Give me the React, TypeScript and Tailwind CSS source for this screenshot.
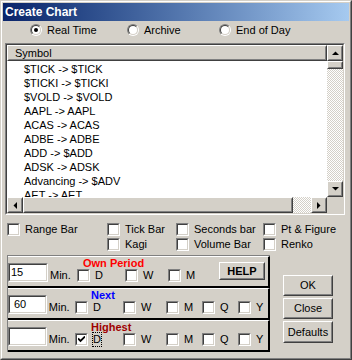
import type { ReactNode } from "react";

const font = 'font-["Liberation_Sans",Arial,sans-serif]';
const dither =
	"bg-[image:repeating-conic-gradient(#ffffff_0%_25%,#d4d0c8_0%_50%)] bg-[length:2px_2px]";

function Sunken({ className = "", inner = "", children }: { className?: string; inner?: string; children?: ReactNode }) {
	return (
		<div className={`border border-t-[#808080] border-l-[#808080] border-r-white border-b-white ${className}`}>
			<div className={`h-full w-full border border-t-[#404040] border-l-[#404040] border-r-[#d4d0c8] border-b-[#d4d0c8] ${inner}`}>
				{children}
			</div>
		</div>
	);
}

function Raised({ className = "", inner = "", children }: { className?: string; inner?: string; children?: ReactNode }) {
	return (
		<div className={`border border-t-white border-l-white border-r-[#404040] border-b-[#404040] bg-[#d4d0c8] ${className}`}>
			<div className={`h-full w-full border border-t-[#d4d0c8] border-l-[#d4d0c8] border-r-[#808080] border-b-[#808080] ${inner}`}>
				{children}
			</div>
		</div>
	);
}

function Arrow({ dir }: { dir: "up" | "down" | "left" | "right" }) {
	const pts = {
		up: "0,4 7,4 3.5,0.5",
		down: "0,0 7,0 3.5,3.5",
		left: "4,0 4,7 0.5,3.5",
		right: "0,0 0,7 3.5,3.5",
	}[dir];
	const vertical = dir === "up" || dir === "down";
	return (
		<Raised className="w-[16px] h-[16px] shrink-0" inner="flex items-center justify-center">
			<svg width={vertical ? 7 : 4} height={vertical ? 4 : 7} viewBox={vertical ? "0 0 7 4" : "0 0 4 7"}>
				<polygon points={pts} fill="#000" />
			</svg>
		</Raised>
	);
}

function Box({ checked = false }: { checked?: boolean }) {
	return (
		<Sunken className="w-[13px] h-[13px] shrink-0" inner="bg-white flex items-center justify-center">
			{checked && (
				<svg width="7" height="7" viewBox="0 0 7 7">
					<path d="M0 2.5 L2.5 5 L7 0.5" stroke="#000" strokeWidth="1.8" fill="none" />
				</svg>
			)}
		</Sunken>
	);
}

function Check({ label, w, checked = false, focus = false }: { label: string; w?: string; checked?: boolean; focus?: boolean }) {
	return (
		<div className={`flex items-center shrink-0 ${w ?? ""}`}>
			<Box checked={checked} />
			<span className={`ml-[5px] leading-[13px] ${focus ? "outline outline-1 outline-dotted outline-black" : ""}`}>{label}</span>
		</div>
	);
}

function Radio({ label, checked = false, w }: { label: string; checked?: boolean; w: string }) {
	return (
		<div className={`flex items-center ${w}`}>
			<div className="w-[12px] h-[12px] rounded-full border border-t-[#808080] border-l-[#808080] border-r-white border-b-white">
				<div className="w-full h-full rounded-full border border-t-[#404040] border-l-[#404040] border-r-[#d4d0c8] border-b-[#d4d0c8] bg-white flex items-center justify-center">
					{checked && <div className="w-[4px] h-[4px] rounded-full bg-black" />}
				</div>
			</div>
			<span className="ml-[5px]">{label}</span>
		</div>
	);
}

const symbols = [
	"$TICK -> $TICK",
	"$TICKI -> $TICKI",
	"$VOLD -> $VOLD",
	"AAPL -> AAPL",
	"ACAS -> ACAS",
	"ADBE -> ADBE",
	"ADD -> $ADD",
	"ADSK -> ADSK",
	"Advancing -> $ADV",
	"AET -> AET",
];

function Section({
	value,
	valuePad,
	title,
	titleColor,
	titleMl,
	checks,
	help = false,
	checkedD = false,
}: {
	value: string;
	valuePad: string;
	title: string;
	titleColor: string;
	titleMl: string;
	checks: string[];
	help?: boolean;
	checkedD?: boolean;
}) {
	const widths: Record<string, string> = { D: "w-[48px]", W: "w-[43px]", M: "w-[36px]", Q: "w-[36px]", Y: "w-[30px]" };
	return (
		<div className="h-[32px] border-t border-t-white border-b-2 border-b-black border-r-2 border-r-black flex items-start">
			<Sunken className="w-[40px] h-[19px] mt-[6px]" inner={`bg-white flex items-center ${valuePad}`}>
				{value}
			</Sunken>
			<span className="ml-[2px] w-[27px] mt-[12px] leading-[13px]">Min.</span>
			<div className={`flex flex-col ${help ? "w-[142px]" : ""}`}>
				<div className={`h-[12px] leading-[12px] font-bold ${titleColor} ${titleMl}`}>{title}</div>
				<div className="flex">
					{checks.map((c) => (
						<Check key={c} label={c} w={widths[c]} checked={checkedD && c === "D"} focus={checkedD && c === "D"} />
					))}
				</div>
			</div>
			{help && (
				<Raised className="w-[46px] h-[18px] mt-[5px]" inner="flex items-center justify-center font-bold">
					HELP
				</Raised>
			)}
		</div>
	);
}

export default function App() {
	return (
		<div className={`w-[352px] h-[360px] overflow-hidden bg-[#d4d0c8] text-[11px] text-black ${font} border border-t-[#d4d0c8] border-l-[#d4d0c8] border-r-[#404040] border-b-[#404040]`}>
			<div className="h-full border border-t-white border-l-white border-r-[#808080] border-b-[#808080] p-[1px]">
				<div className="h-[18px] bg-gradient-to-r from-[#0a246a] to-[#a6caf0] flex items-center pl-[2px]">
					<span className="text-white font-bold text-[12px]">Create Chart</span>
				</div>

				<div className="flex h-[12px] mt-[3px] ml-[27px]">
					<Radio label="Real Time" checked w="w-[97px]" />
					<Radio label="Archive" w="w-[92px]" />
					<Radio label="End of Day" w="w-[100px]" />
				</div>

				<Sunken className="w-[340px] h-[172px] ml-[2px] mt-[7px]" inner="flex flex-col">
					<div className="flex h-[152px]">
						<div className="flex-1 flex flex-col bg-white overflow-hidden">
							<Raised className="h-[16px] shrink-0" inner="flex items-center pl-[6px]">
								Symbol
							</Raised>
							<div className="pl-[17px] pt-[1px]">
								{symbols.map((s) => (
									<div key={s} className="leading-[14px] whitespace-nowrap">
										{s}
									</div>
								))}
							</div>
						</div>
						<div className="w-[16px] flex flex-col">
							<Arrow dir="up" />
							<Raised className="h-[8px] shrink-0" />
							<div className={`flex-1 ${dither}`} />
							<Arrow dir="down" />
						</div>
					</div>
					<div className="flex h-[16px]">
						<Arrow dir="left" />
						<Raised className="w-[270px] h-[16px] shrink-0" />
						<div className={`flex-1 ${dither}`} />
						<Arrow dir="right" />
						<div className="w-[16px] bg-[#d4d0c8]" />
					</div>
				</Sunken>

				<div className="flex pl-[4px] mt-[8px]">
					<Check label="Range Bar" w="w-[100px]" />
					<Check label="Tick Bar" w="w-[69px]" />
					<Check label="Seconds bar" w="w-[87px]" />
					<Check label="Pt & Figure" />
				</div>
				<div className="flex pl-[4px] mt-[2px]">
					<div className="w-[100px]" />
					<Check label="Kagi" w="w-[69px]" />
					<Check label="Volume Bar" w="w-[87px]" />
					<Check label="Renko" />
				</div>

				<div className="flex pl-[4px] mt-[4px]">
					<div className="w-[263px] border-t border-l border-[#808080]">
						<Section
							value="15"
							valuePad="pl-[1px]"
							title="Own Period"
							titleColor="text-[#ff0000]"
							titleMl="ml-[6px]"
							checks={["D", "W", "M"]}
							help
						/>
						<Section
							value="60"
							valuePad="pl-[4px]"
							title="Next"
							titleColor="text-[#0000ff]"
							titleMl="ml-[16px]"
							checks={["D", "W", "M", "Q", "Y"]}
						/>
						<Section
							value=""
							valuePad=""
							title="Highest"
							titleColor="text-[#a00000]"
							titleMl="ml-[16px]"
							checks={["D", "W", "M", "Q", "Y"]}
							checkedD
						/>
					</div>
					<div className="ml-[13px] mt-[20px] w-[50px] flex flex-col gap-[2px]">
						<Raised className="h-[21px]" inner="flex items-center justify-center">OK</Raised>
						<Raised className="h-[21px]" inner="flex items-center justify-center">Close</Raised>
						<Raised className="h-[22px]" inner="flex items-center justify-center">Defaults</Raised>
					</div>
				</div>
			</div>
		</div>
	);
}
